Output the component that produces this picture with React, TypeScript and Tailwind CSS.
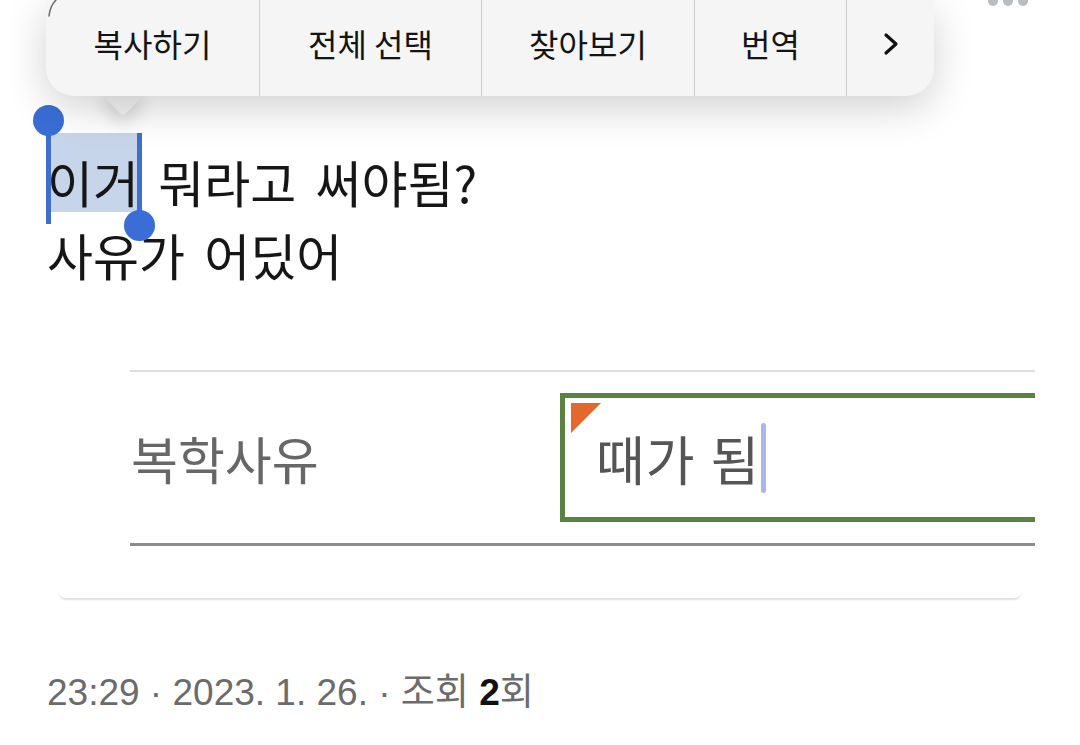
export default function App() {
  return (
    <div className="relative w-[1080px] h-[745px] overflow-hidden bg-white font-['Noto_Sans_CJK_KR',sans-serif]">
      <div className="pt-[145px] pl-[47px] text-[50px] leading-[73px] text-[#161616] [word-spacing:8px]">
        <p>
          <span className="relative inline-block">
            <span className="absolute left-0 top-[-12px] w-[92px] h-[79px] bg-[#c7d5ea]" />
            <span className="absolute left-[-1px] top-[-24px] w-[5px] h-[103px] bg-[#3f6fca]" />
            <span className="absolute left-[90px] top-[-12px] w-[5px] h-[94px] bg-[#3f6fca]" />
            <span className="absolute left-[-14px] top-[-40px] w-[31px] h-[31px] rounded-full bg-[#3a6ed6]" />
            <span className="absolute left-[77px] top-[65px] w-[31px] h-[31px] rounded-full bg-[#3a6ed6]" />
            <span className="relative">이거</span>
          </span>{" "}
          뭐라고 써야됨?
        </p>
        <p>사유가 어딨어</p>
      </div>

      <div className="mt-[79px] ml-[58px] w-[964px] pb-[52px] rounded-b-[8px] shadow-[0_3px_2px_-1px_rgba(0,0,0,0.13)]">
        <div className="ml-[72px] w-[905px] h-[176px] border-t-2 border-t-[#dedede] border-b-[3px] border-b-[#8b8b8b] grid grid-cols-[430px_1fr] items-center">
          <div className="pl-[1px] text-[51px] leading-[60px] text-[#676767]">복학사유</div>
          <div className="relative h-[129px] border-[5px] border-r-0 border-[#5a8342] flex items-center pl-[31px]">
            <span className="absolute left-[6px] top-[5px] w-0 h-0 border-t-[30px] border-t-[#e2692b] border-r-[30px] border-r-transparent" />
            <span className="text-[53px] leading-[60px] text-[#555555] tracking-[1px] [word-spacing:2px]">때가 됨</span>
            <span className="ml-[1px] inline-block w-[5px] h-[70px] rounded-full bg-[#a9b7ea]" />
          </div>
        </div>
      </div>

      <div className="mt-[73px] pl-[47px] text-[37px] leading-[44px] text-[#6b6b6b] font-['Liberation_Sans','Noto_Sans_CJK_KR',sans-serif]">
        23:29 · 2023. 1. 26. · 조회 <span className="font-bold text-[#111111]">2</span>회
      </div>

      <div className="absolute left-[988px] top-[-4px] flex gap-[5px]">
        <span className="w-[10px] h-[10px] rounded-full bg-[#b9bcc1]" />
        <span className="w-[10px] h-[10px] rounded-full bg-[#b9bcc1]" />
        <span className="w-[10px] h-[10px] rounded-full bg-[#b9bcc1]" />
      </div>

      <div className="absolute left-[108px] top-[80px] w-[30px] h-[30px] rotate-45 rounded-[4px] bg-[#f5f5f5] shadow-[6px_6px_18px_rgba(0,0,0,0.16)]" />
      <div className="absolute left-[46px] top-0 w-[888px] h-[96px] flex rounded-b-[28px] bg-[#f5f5f5] shadow-[0_12px_40px_rgba(0,0,0,0.18)] text-[32px] text-[#141414]">
        <div className="w-[213px] flex items-center justify-center pb-[10px]">복사하기</div>
        <div className="w-[222px] flex items-center justify-center pb-[10px] border-l border-[#cdcdcd]">전체 선택</div>
        <div className="w-[213px] flex items-center justify-center pb-[10px] border-l border-[#cdcdcd]">찾아보기</div>
        <div className="w-[152px] flex items-center justify-center pb-[10px] border-l border-[#cdcdcd]">번역</div>
        <div className="w-[88px] flex items-center justify-center pb-[8px] border-l border-[#cdcdcd]">
          <svg width="16" height="24" viewBox="0 0 16 24" fill="none">
            <polyline points="3,3 13,12 3,21" stroke="#111" strokeWidth="3.2" strokeLinecap="round" strokeLinejoin="round" />
          </svg>
        </div>
      </div>
      <svg className="absolute left-[44px] top-0" width="16" height="20" viewBox="0 0 16 20" fill="none">
        <path d="M12 0 Q6 6 5 16" stroke="#6a6a6a" strokeWidth="1.5" strokeLinecap="round" />
      </svg>
    </div>
  );
}
